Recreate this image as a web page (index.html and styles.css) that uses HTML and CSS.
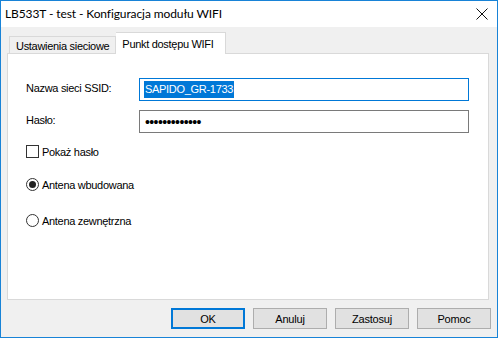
FILE: index.html
```html
<!DOCTYPE html>
<html>
<head>
<meta charset="utf-8">
<link rel="stylesheet" href="styles.css">
</head>
<body>
<div class="window">
  <div class="titlebar">
    <span class="title">LB533T - test - Konfiguracja modułu WIFI</span>
    <svg class="close" width="12" height="12" viewBox="0 0 12 12"><path d="M0.5 0.5 L11.5 11.5 M11.5 0.5 L0.5 11.5" stroke="#111" stroke-width="1" fill="none"/></svg>
  </div>
  <div class="content">
    <div class="tabs">
      <div class="tab">Ustawienia sieciowe</div>
      <div class="tab active">Punkt dostępu WIFI</div>
    </div>
    <div class="panel">
      <div class="form">
        <label class="lbl">Nazwa sieci SSID:</label>
        <div class="input focused"><span class="sel">SAPIDO_GR-1733</span></div>
        <label class="lbl">Hasło:</label>
        <div class="input"><span class="dots">•••••••••••••</span></div>
      </div>
      <div class="check-row">
        <span class="checkbox"></span><span>Pokaż hasło</span>
      </div>
      <div class="radio-row first">
        <span class="radio checked"></span><span>Antena wbudowana</span>
      </div>
      <div class="radio-row">
        <span class="radio"></span><span>Antena zewnętrzna</span>
      </div>
    </div>
    <div class="buttons">
      <button class="btn default">OK</button>
      <button class="btn">Anuluj</button>
      <button class="btn">Zastosuj</button>
      <button class="btn">Pomoc</button>
    </div>
  </div>
</div>
</body>
</html>
```
FILE: styles.css
```css
html, body {
  margin: 0;
  padding: 0;
  background: #ffffff;
}
body {
  font-family: "Liberation Sans", Arial, sans-serif;
  font-size: 11px;
  letter-spacing: -0.3px;
  color: #000;
}
.window {
  width: 498px;
  height: 338px;
  box-sizing: border-box;
  border: 1px solid #1883d7;
  background: #f0f0f0;
  display: flex;
  flex-direction: column;
}
.titlebar {
  height: 26px;
  flex: none;
  background: #ffffff;
  display: flex;
  align-items: center;
  justify-content: space-between;
  padding: 0 9px 0 4px;
}
.title {
  font-family: Lato, "Liberation Sans", sans-serif;
  font-size: 12px;
  letter-spacing: -0.1px;
  margin-top: -1px;
}
.close {
  display: block;
  margin-top: -1px;
}
.content {
  padding: 5px 8px 0 6px;
  display: flex;
  flex-direction: column;
}
.tabs {
  display: flex;
  align-items: flex-end;
  height: 21px;
  margin-left: 2px;
  position: relative;
  z-index: 1;
}
.tab {
  height: 17px;
  box-sizing: border-box;
  border: 1px solid #d9d9d9;
  border-bottom: none;
  background: #f0f0f0;
  padding: 2px 6px 0 6px;
  line-height: 14px;
}
.tab.active {
  height: 22px;
  margin-bottom: -1px;
  background: #ffffff;
  border-left: none;
  padding: 4px 11px 0 6px;
}
.panel {
  height: 247px;
  box-sizing: border-box;
  border: 1px solid #d9d9d9;
  background: #ffffff;
  padding: 24px 0 0 18px;
}
.form {
  display: grid;
  grid-template-columns: 113px 330px;
  row-gap: 9px;
  align-items: center;
}
.lbl {
  margin-top: -4px;
}
.input {
  height: 23px;
  box-sizing: border-box;
  border: 1px solid #7a7a7a;
  display: flex;
  align-items: center;
  padding-left: 4px;
}
.input.focused {
  border-color: #0078d7;
}
.sel {
  background: #0078d7;
  color: #fff;
  line-height: 17px;
  padding: 0 1px;
}
.dots {
  font-family: "Liberation Sans", Arial, sans-serif;
  font-size: 14px;
  letter-spacing: -0.6px;
  line-height: 14px;
  padding-left: 1px;
  margin-top: 1px;
}
.check-row, .radio-row {
  display: flex;
  align-items: center;
  gap: 3px;
  height: 13px;
}
.check-row {
  margin-top: 12px;
}
.radio-row.first {
  margin-top: 20px;
}
.radio-row + .radio-row {
  margin-top: 23px;
}
.checkbox {
  width: 13px;
  height: 13px;
  box-sizing: border-box;
  border: 1px solid #333;
  background: #fff;
}
.radio {
  width: 13px;
  height: 13px;
  box-sizing: border-box;
  border: 1px solid #333;
  border-radius: 50%;
  background: #fff;
  display: flex;
  align-items: center;
  justify-content: center;
}
.radio.checked::after {
  content: "";
  width: 7px;
  height: 7px;
  border-radius: 50%;
  background: #222;
}
.buttons {
  display: flex;
  justify-content: flex-end;
  gap: 8px;
  margin-top: 8px;
  margin-right: -2px;
}
.btn {
  width: 74px;
  height: 21px;
  box-sizing: border-box;
  border: 1px solid #adadad;
  background: #e1e1e1;
  font-family: inherit;
  font-size: 11px;
  letter-spacing: -0.2px;
  color: #000;
  padding: 0;
}
.btn.default {
  border: 2px solid #0078d7;
}
```
